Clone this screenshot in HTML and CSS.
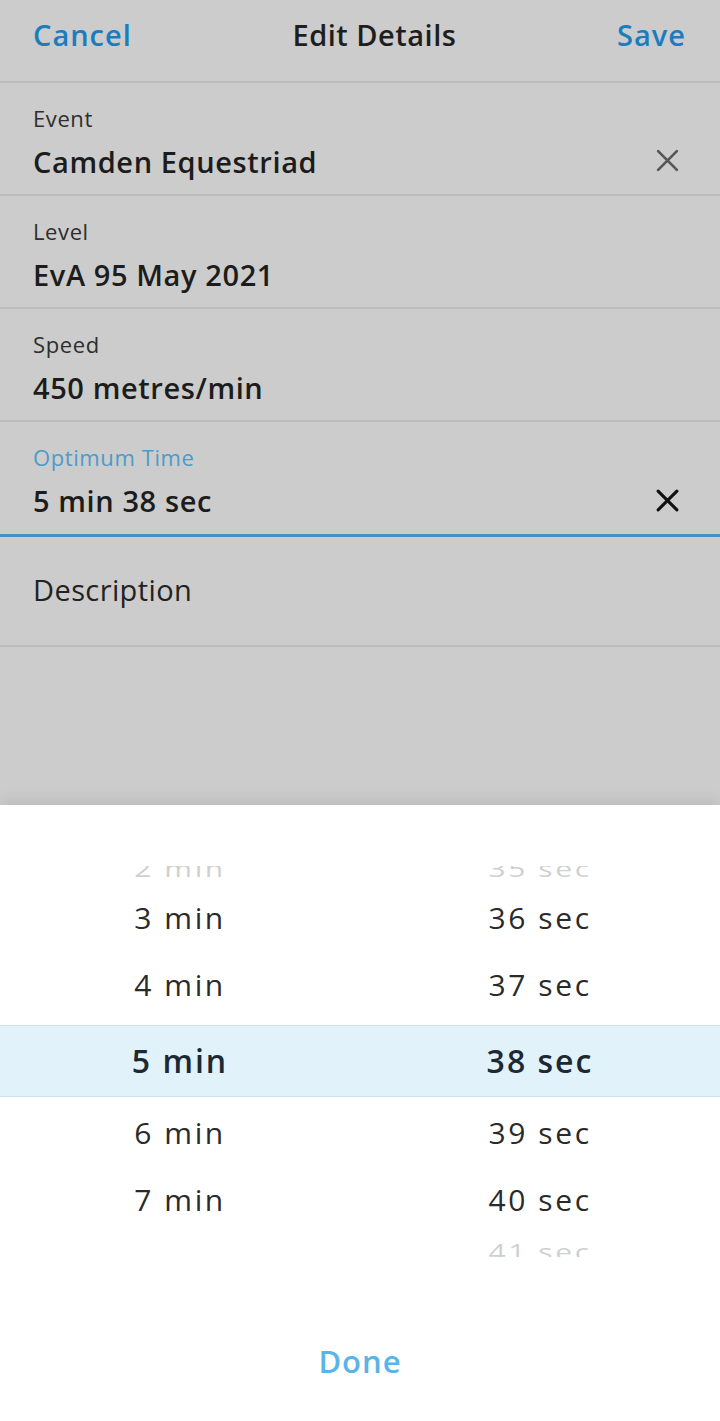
FILE: index.html
```html
<!DOCTYPE html>
<html>
<head>
<meta charset="utf-8">
<link rel="stylesheet" href="styles.css">
</head>
<body>
<div class="screen">
  <div class="backdrop">
    <header class="topbar">
      <span class="nav-btn">Cancel</span>
      <span class="title">Edit Details</span>
      <span class="nav-btn">Save</span>
    </header>
    <div class="field">
      <div class="field-text">
        <div class="label">Event</div>
        <div class="value">Camden Equestriad</div>
      </div>
      <svg class="clear clear-grey" viewBox="0 0 24 24"><path d="M3 3 L21 21 M21 3 L3 21"/></svg>
    </div>
    <div class="field">
      <div class="field-text">
        <div class="label">Level</div>
        <div class="value">EvA 95 May 2021</div>
      </div>
    </div>
    <div class="field">
      <div class="field-text">
        <div class="label">Speed</div>
        <div class="value">450 metres/min</div>
      </div>
    </div>
    <div class="field field-active">
      <div class="field-text">
        <div class="label label-active">Optimum Time</div>
        <div class="value">5 min 38 sec</div>
      </div>
      <svg class="clear clear-dark" viewBox="0 0 24 24"><path d="M3 3 L21 21 M21 3 L3 21"/></svg>
    </div>
    <div class="field field-desc">
      <div class="desc">Description</div>
    </div>
  </div>
  <div class="sheet">
    <div class="picker">
      <div class="prow r0"><span class="ghost">2 min</span><span class="ghost">35 sec</span></div>
      <div class="prow r1"><span>3 min</span><span>36 sec</span></div>
      <div class="prow r2"><span>4 min</span><span>37 sec</span></div>
      <div class="prow sel"><span>5 min</span><span>38 sec</span></div>
      <div class="prow r4"><span>6 min</span><span>39 sec</span></div>
      <div class="prow r5"><span>7 min</span><span>40 sec</span></div>
      <div class="prow r6"><span class="ghost faint">8 min</span><span class="ghost">41 sec</span></div>
    </div>
    <div class="done">Done</div>
  </div>
</div>
</body>
</html>
```
FILE: styles.css
```css
html, body {
  margin: 0;
  padding: 0;
}
body {
  font-family: "Open Sans", "Liberation Sans", sans-serif;
  background: #ffffff;
}
.screen {
  width: 720px;
  height: 1421px;
  display: flex;
  flex-direction: column;
  overflow: hidden;
}
.backdrop {
  height: 805px;
  background: #cccccc;
  flex: none;
}
.topbar {
  height: 83px;
  box-sizing: border-box;
  padding: 0 34px 12px 33px;
  display: flex;
  align-items: center;
  justify-content: space-between;
  border-bottom: 2px solid #bdbdbd;
}
.nav-btn {
  font-size: 29px;
  font-weight: 600;
  letter-spacing: 1px;
  color: #1a7dbf;
}
.title {
  font-size: 29px;
  font-weight: 600;
  letter-spacing: 0.5px;
  color: #1e1e1e;
}
.field {
  height: 111px;
  padding: 0 40px 0 33px;
  display: flex;
  align-items: center;
  border-bottom: 2px solid #bdbdbd;
}
.field-text {
  flex: 1;
  align-self: stretch;
  padding-top: 20px;
}
.label {
  font-size: 22px;
  line-height: 30px;
  letter-spacing: 0.6px;
  color: #2e2e2e;
}
.label-active {
  color: #4b9bcb;
}
.value {
  margin-top: 12px;
  font-size: 29px;
  line-height: 34px;
  font-weight: 600;
  letter-spacing: 0.6px;
  color: #1c1c1c;
}
.field-active {
  height: 112px;
  border-bottom: 3px solid #4a8fbf;
}
.field-active .field-text {
  padding-top: 20px;
}
.field-active .value {
  margin-top: 12px;
}
.field-desc {
  height: 104px;
  padding-bottom: 4px;
}
.desc {
  font-size: 29px;
  letter-spacing: 0.4px;
  color: #222222;
}
.clear {
  width: 25px;
  height: 25px;
  margin-top: 44px;
  fill: none;
  stroke-linecap: round;
}
.clear-grey path {
  stroke: #565656;
  stroke-width: 2.6;
}
.clear-dark path {
  stroke: #111111;
  stroke-width: 3;
}
.sheet {
  flex: 1;
  background: #ffffff;
  box-shadow: 0 -6px 14px rgba(0, 0, 0, 0.07);
  position: relative;
}
.picker {
  margin-top: 61px;
  height: 391px;
  overflow: hidden;
}
.prow {
  display: grid;
  grid-template-columns: 1fr 1fr;
  text-align: center;
  font-size: 30px;
  letter-spacing: 2.6px;
  color: #2a2a2a;
}
.prow span {
  display: block;
}
.r0 { margin-top: -19px; height: 44px; line-height: 44px; }
.r1 { height: 54px; line-height: 54px; }
.r2 { height: 80px; line-height: 80px; }
.sel {
  height: 70px;
  line-height: 70px;
  background: #e1f2fb;
  border-top: 1px solid #c8e2f0;
  border-bottom: 1px solid #c8e2f0;
  font-weight: 600;
  font-size: 32px;
  letter-spacing: 2px;
  color: #1c2933;
}
.r4 { height: 72px; line-height: 72px; }
.r5 { height: 62px; line-height: 62px; }
.r6 { height: 42px; line-height: 42px; }
.ghost {
  opacity: 0.22;
  transform: scaleY(0.7);
}
.prow .faint {
  opacity: 0;
  color: transparent;
}
.done {
  margin-top: 64px;
  height: 80px;
  line-height: 80px;
  text-align: center;
  font-size: 31px;
  font-weight: 600;
  letter-spacing: 1px;
  color: #5ab4e6;
}
```
